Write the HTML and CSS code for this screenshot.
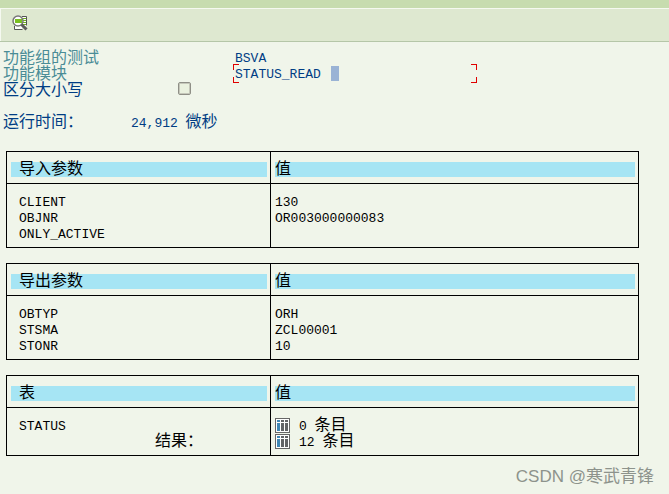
FILE: index.html
```
<!DOCTYPE html>
<html lang="zh-CN">
<head>
    <meta charset="UTF-8">
    <meta name="viewport" content="width=device-width, initial-scale=1.0">
    <title>功能组的测试</title>
    <link rel="stylesheet" href="styles.css">
</head>
<body>

    <svg class="symbols" width="0" height="0">
        <symbol id="icon-table" viewBox="0 0 15 15">
            <rect x="0.5" y="0.5" width="14" height="14" fill="#fff" stroke="#666"/>
            <path d="M2 2h3v2h-3z M2 5h3v8h-3z" fill="#3f87b5"/>
            <path d="M6 2h3v2h-3z M10 2h3v2h-3z M6 5h3v8h-3z M10 5h3v8h-3z" fill="#626466"/>
        </symbol>
    </svg>

    <div class="toolbar">
        <button type="button" class="tool-button" aria-label="显示">
            <svg width="16" height="16" viewBox="0 0 16 16">
                <path d="M10 1.500h4.500v9M2.500 11v3.500h8" fill="none" stroke="#555"/>
                <path d="M10 2h4v9h-4z M3 11h7v3h-7z" fill="#fff"/>
                <path d="M11 3h3v1h-3z M11 5h3v1h-3z M11 7h3v1h-3z M11 9h3v1h-3z" fill="#6fb31b"/>
                <circle cx="6" cy="6" r="5" fill="#fff" stroke="#777" stroke-width="1.500"/>
                <path d="M3 4h7v4h-7z" fill="#7abf22"/>
                <path d="M9.500 9.500l5 5" stroke="#5c5c5c" stroke-width="3"/>
            </svg>
        </button>
    </div>

    <main class="content">
        <div class="fields">
            <div class="row muted">
                <span class="name">功能组的测试</span>
                <span class="latin">BSVA</span>
            </div>
            <div class="row muted">
                <span class="name">功能模块</span>
                <span class="focus-box"><span class="latin">STATUS_READ</span><span class="cursor"></span></span>
            </div>
            <div class="row">
                <label class="check-name" for="caseCheck">区分大小写</label>
                <input type="checkbox" id="caseCheck">
            </div>
            <div class="row runtime">
                <span class="time-name">运行时间：</span>
                <span><span class="latin">24,912 </span>微秒</span>
            </div>
        </div>

        <table class="params">
            <thead>
                <tr>
                    <th><div class="band first">导入参数</div></th>
                    <th><div class="band">值</div></th>
                </tr>
            </thead>
            <tbody>
                <tr>
                    <td><span class="latin">CLIENT</span></td>
                    <td><span class="latin">130</span></td>
                </tr>
                <tr>
                    <td><span class="latin">OBJNR</span></td>
                    <td><span class="latin">OR003000000083</span></td>
                </tr>
                <tr>
                    <td><span class="latin">ONLY_ACTIVE</span></td>
                    <td></td>
                </tr>
            </tbody>
        </table>

        <table class="params">
            <thead>
                <tr>
                    <th><div class="band first">导出参数</div></th>
                    <th><div class="band">值</div></th>
                </tr>
            </thead>
            <tbody>
                <tr>
                    <td><span class="latin">OBTYP</span></td>
                    <td><span class="latin">ORH</span></td>
                </tr>
                <tr>
                    <td><span class="latin">STSMA</span></td>
                    <td><span class="latin">ZCL00001</span></td>
                </tr>
                <tr>
                    <td><span class="latin">STONR</span></td>
                    <td><span class="latin">10</span></td>
                </tr>
            </tbody>
        </table>

        <table class="params">
            <thead>
                <tr>
                    <th><div class="band first">表</div></th>
                    <th><div class="band">值</div></th>
                </tr>
            </thead>
            <tbody>
                <tr>
                    <td><span class="latin">STATUS</span></td>
                    <td>
                        <div class="entry">
                            <svg width="15" height="15"><use href="#icon-table"/></svg>
                            <span><span class="latin">0 </span>条目</span>
                        </div>
                    </td>
                </tr>
                <tr>
                    <td class="result">结果：</td>
                    <td>
                        <div class="entry">
                            <svg width="15" height="15"><use href="#icon-table"/></svg>
                            <span><span class="latin">12 </span>条目</span>
                        </div>
                    </td>
                </tr>
            </tbody>
        </table>
    </main>

    <div class="watermark">CSDN @寒武青锋</div>

</body>
</html>
```

FILE: styles.css
```
* {
    box-sizing: border-box;
}

body {
    margin: 0;
    min-height: 100vh;
    background: #f0f5ea;
    color: #000;
    font-family: "Liberation Mono", "Noto Sans CJK SC", monospace;
    font-size: 16px;
    line-height: 16px;
}

.symbols {
    display: none;
}

.latin {
    font-size: 13px;
    line-height: 12px;
    white-space: pre;
}

.toolbar {
    display: flex;
    align-items: center;
    height: 42px;
    padding: 0 12px;
    background: #dee8d0;
    border-top: 8px solid #c7dcaf;
    border-bottom: 1px solid #b5c6a8;
    box-shadow: inset 1px 1px #f5f9f0;
}

.tool-button {
    display: flex;
    margin: 0;
    padding: 0 0 3px;
    border: none;
    background: none;
    cursor: pointer;
}

.content {
    padding: 8px 30px 0 6px;
}

.fields {
    margin-left: -3px;
    color: #003d84;
}

.row {
    display: flex;
    height: 16px;
    line-height: 18px;
}

.name {
    width: 232px;
}

.muted .name {
    color: #4a8c96;
}

.check-name {
    width: 175px;
}

.time-name {
    width: 128px;
}

.runtime {
    margin-top: 16px;
}

.row > .latin {
    line-height: 18px;
}

/* red corner marks around the active field */
.focus-box {
    --mark: #e00000;
    display: flex;
    width: 244px;
    height: 19px;
    margin: -2px 0 0 -2px;
    padding: 2px;
    background:
        linear-gradient(var(--mark), var(--mark)) left top / 6px 1px,
        linear-gradient(var(--mark), var(--mark)) left top / 1px 6px,
        linear-gradient(var(--mark), var(--mark)) right top / 6px 1px,
        linear-gradient(var(--mark), var(--mark)) right top / 1px 6px,
        linear-gradient(var(--mark), var(--mark)) left bottom / 6px 1px,
        linear-gradient(var(--mark), var(--mark)) left bottom / 1px 6px,
        linear-gradient(var(--mark), var(--mark)) right bottom / 6px 1px,
        linear-gradient(var(--mark), var(--mark)) right bottom / 1px 6px;
    background-repeat: no-repeat;
}

.focus-box .latin {
    width: 96px;
    line-height: 18px;
}

.cursor {
    width: 8px;
    height: 15px;
    background: #9ab3d5;
}

input[type="checkbox"] {
    appearance: none;
    width: 13px;
    height: 13px;
    margin: 0;
    border: 1px solid #8f8f87;
    border-radius: 2px;
    background: #eaf1df;
    box-shadow: inset 0 0 0 1px #c5c7ba;
}

input[type="checkbox"]:checked {
    background: #4a8c96;
}

.params {
    width: 100%;
    margin: 21px 0 0;
    table-layout: fixed;
    border-collapse: separate;
    border-spacing: 0;
    border: 1px solid #000;
}

.params + .params {
    margin-top: 15px;
}

.params th {
    height: 32px;
    padding: 10px 3px 0 4px;
    border-bottom: 1px solid #000;
    font-weight: normal;
    text-align: left;
    vertical-align: top;
}

.params th:first-child {
    width: 264px;
    border-right: 1px solid #000;
}

.band {
    height: 15px;
    background: #a6e5f4;
}

.band.first {
    padding-left: 8px;
}

.params td {
    height: 16px;
    padding: 0 4px;
    vertical-align: top;
}

.params td:first-child {
    padding-left: 12px;
    border-right: 1px solid #000;
}

.params tbody tr:first-child td {
    height: 26px;
    padding-top: 10px;
}

.params tbody tr:last-child td {
    height: 21px;
}

.params td.result {
    padding-left: 148px;
}

.entry {
    display: flex;
    gap: 9px;
}

.watermark {
    position: absolute;
    right: 15px;
    bottom: 5px;
    color: #8d938c;
    font-family: "Liberation Sans", "Noto Sans CJK SC", sans-serif;
    font-size: 17px;
    line-height: 24px;
}
```
